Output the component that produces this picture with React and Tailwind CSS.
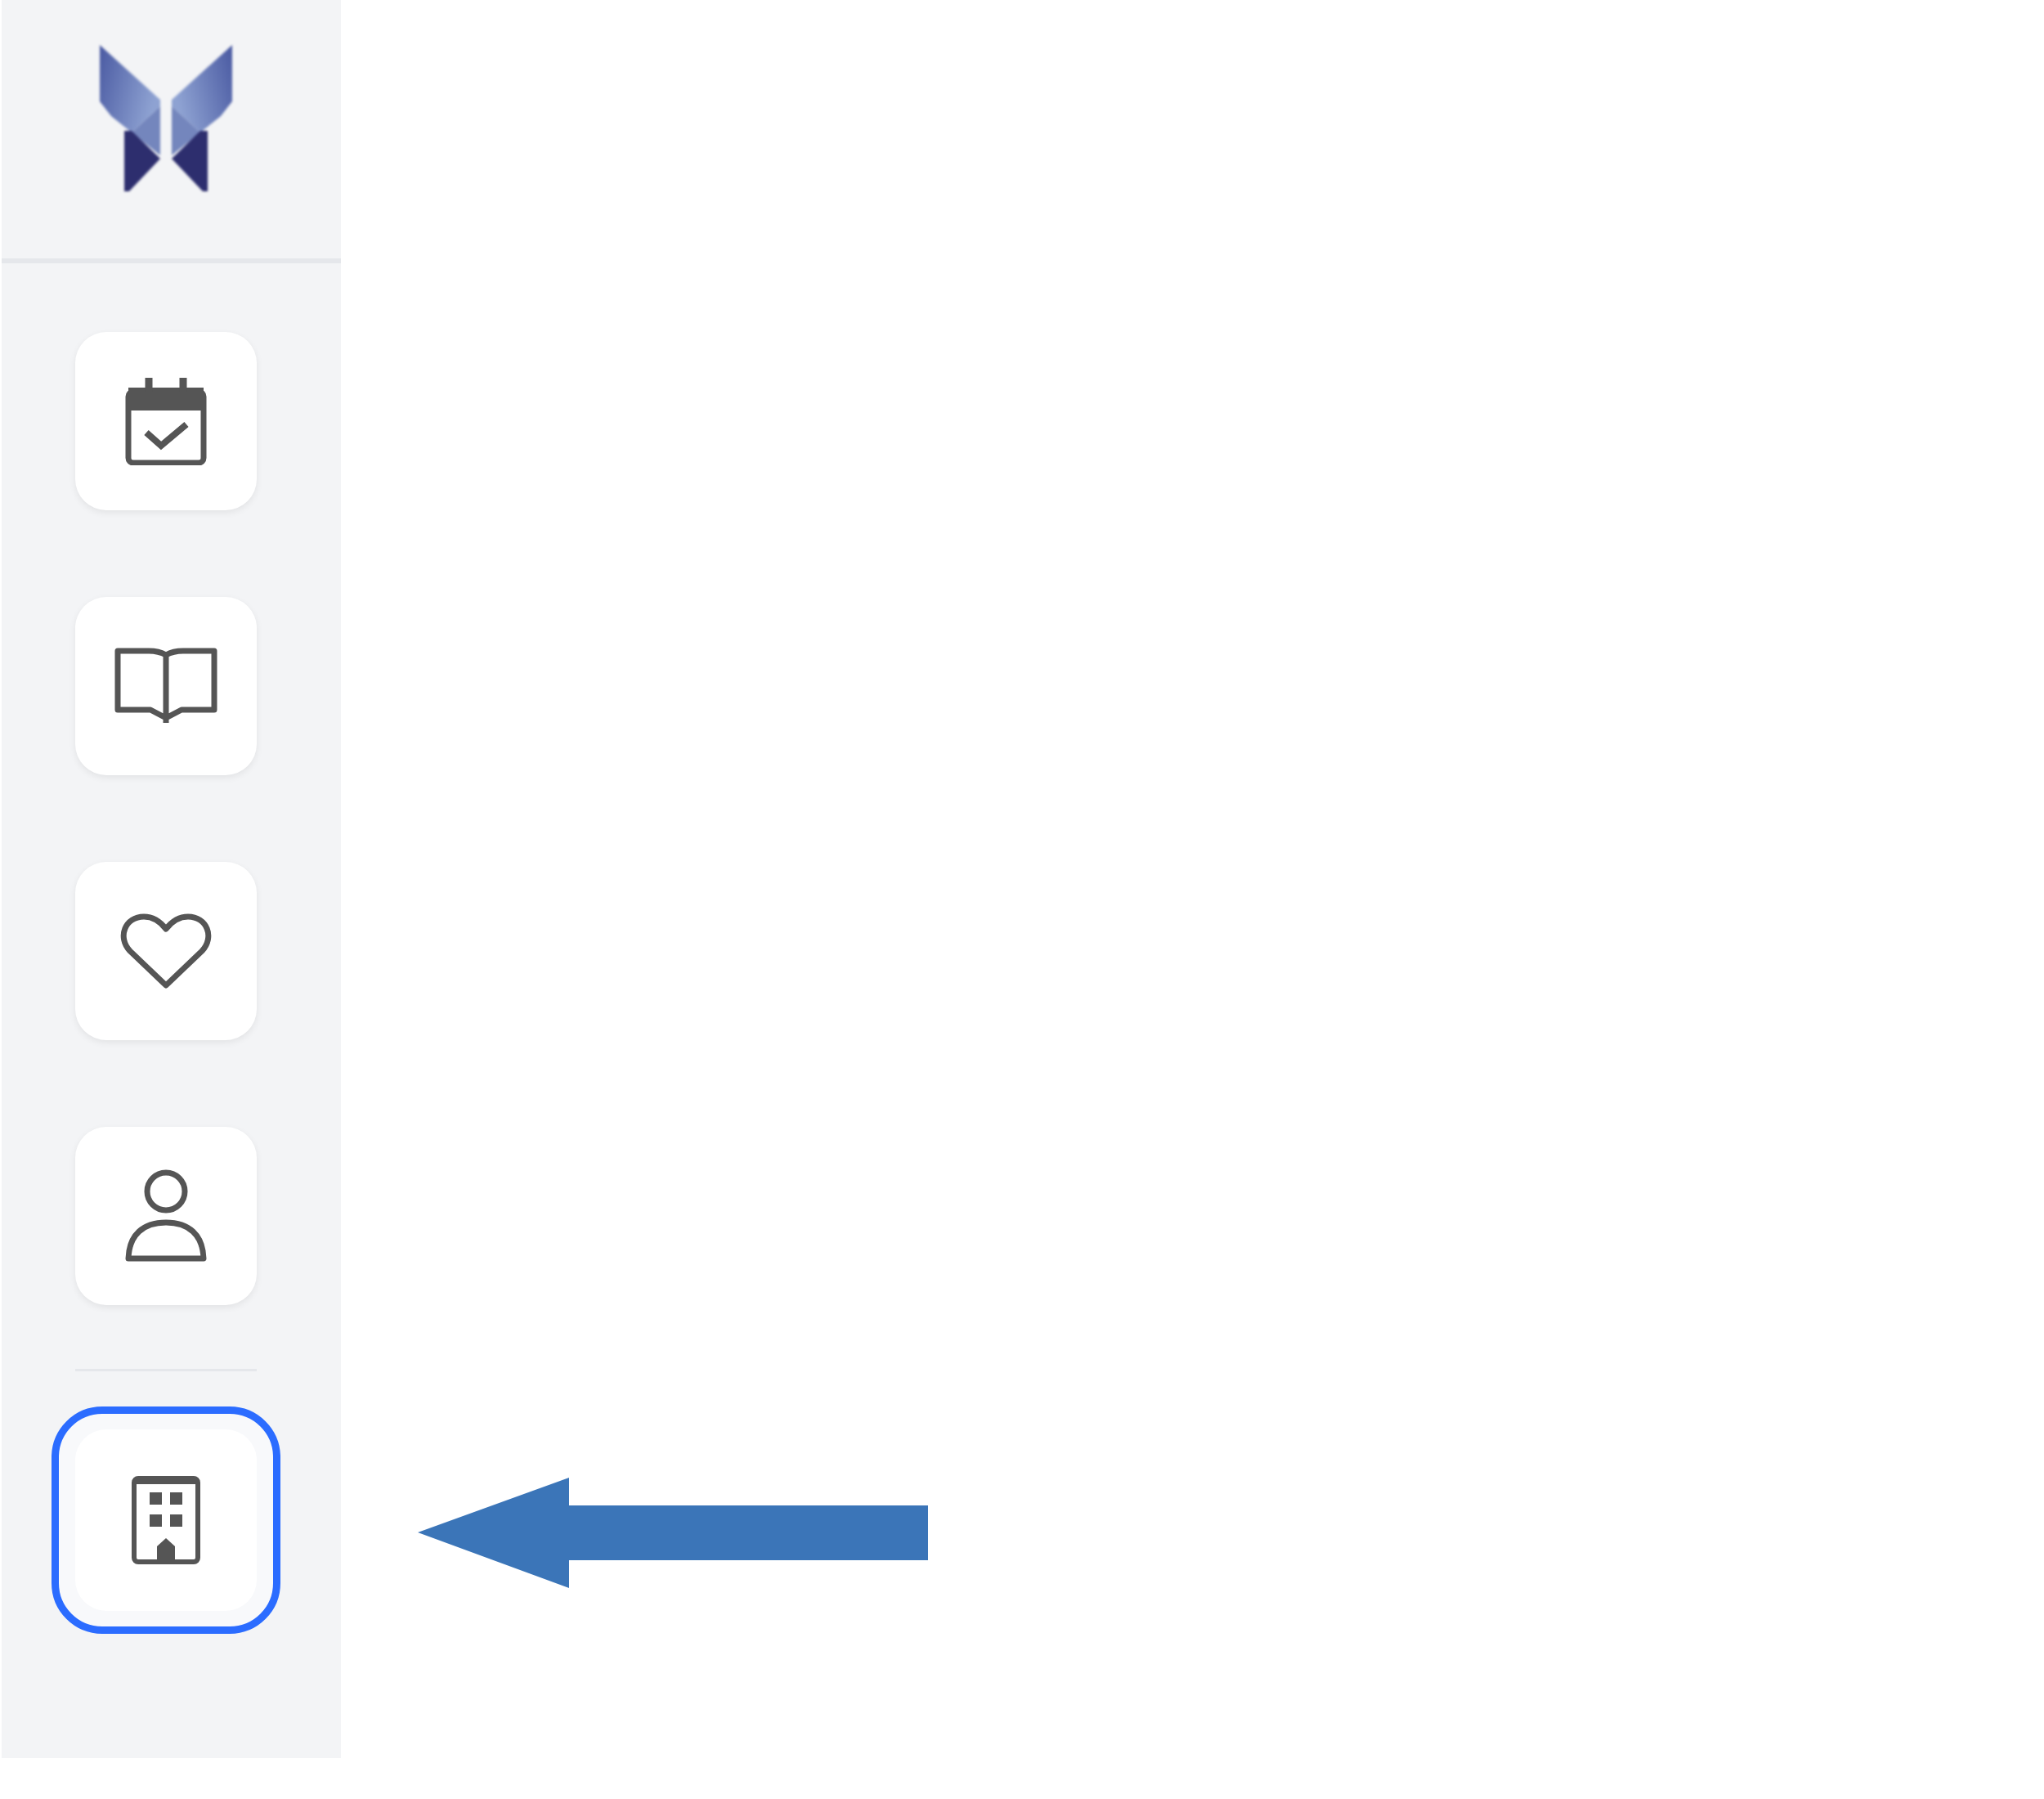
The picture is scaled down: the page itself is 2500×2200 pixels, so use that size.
import React from "react";

const Logo = () => (
  <svg width="162" height="184" viewBox="0 0 162 184" className="blur-[1.5px]">
    <defs>
      <linearGradient id="wingLeft" x1="0" y1="0" x2="1" y2="0.35">
        <stop offset="0" stopColor="#4a5aa2" />
        <stop offset="1" stopColor="#8ea2d2" />
      </linearGradient>
      <linearGradient id="wingRight" x1="1" y1="0" x2="0" y2="0.35">
        <stop offset="0" stopColor="#4a5aa2" />
        <stop offset="1" stopColor="#8ea2d2" />
      </linearGradient>
    </defs>
    <path d="M0 3 L74 70 L74 78 L39 110 L14 90 L0 72 Z" fill="url(#wingLeft)" />
    <path d="M74 78 L39 110 L74 138 Z" fill="#7486bd" />
    <path d="M30 108 L39 108 L74 142 L36 182 L30 182 Z" fill="#2d2e6e" />
    <path d="M162 3 L88 70 L88 78 L123 110 L148 90 L162 72 Z" fill="url(#wingRight)" />
    <path d="M88 78 L123 110 L88 138 Z" fill="#7486bd" />
    <path d="M132 108 L123 108 L88 142 L126 182 L132 182 Z" fill="#2d2e6e" />
  </svg>
);

const CalendarIcon = () => (
  <svg width="100" height="108" viewBox="0 0 100 108" fill="none" stroke="#555" strokeWidth="7" className="blur-[0.7px]">
    <path d="M4 24 a6 6 0 0 1 6-6 H90 a6 6 0 0 1 6 6 V99 a6 6 0 0 1-6 6 H10 a6 6 0 0 1-6-6 Z" />
    <path d="M4 13 H96 V41 H4 Z" fill="#555" stroke="none" />
    <path d="M29 1 V18 M71 1 V18" strokeWidth="9" />
    <path d="M26 68 L44 84 L75 58" strokeWidth="8" />
  </svg>
);

const BookIcon = () => (
  <svg width="126" height="94" viewBox="0 0 126 94" fill="none" stroke="#555" strokeWidth="7" className="blur-[0.7px]">
    <path d="M63 9 C56 5 50 4 42 4 H4 V76 H44 L63 86 L82 76 H122 V4 H84 C76 4 70 5 63 9 V92" strokeLinejoin="round" />
  </svg>
);

const HeartIcon = () => (
  <svg width="114" height="94" viewBox="0 0 114 94" fill="none" stroke="#555" strokeWidth="7" className="blur-[0.7px]">
    <path d="M57 89 L13 47 C-3 30 7 5 30 5 C41 5 50 11 57 20 C64 11 73 5 84 5 C107 5 117 30 101 47 Z" strokeLinejoin="round" />
  </svg>
);

const PersonIcon = () => (
  <svg width="100" height="114" viewBox="0 0 100 114" fill="none" stroke="#555" strokeWidth="7" className="blur-[0.7px]">
    <circle cx="50" cy="27" r="23" />
    <path d="M4 109 C5 80 22 65 50 65 C78 65 95 80 96 109 Z" strokeLinejoin="round" />
  </svg>
);

const BuildingIcon = () => (
  <svg width="84" height="108" viewBox="0 0 84 108" fill="none" stroke="#555" strokeWidth="6" className="blur-[0.7px]">
    <rect x="3" y="3" width="78" height="102" rx="5" />
    <path d="M3 3 H81 V10 H3 Z" fill="#555" stroke="none" />
    <g fill="#555" stroke="none">
      <rect x="22" y="20" width="15" height="15" />
      <rect x="47" y="20" width="15" height="15" />
      <rect x="22" y="47" width="15" height="15" />
      <rect x="47" y="47" width="15" height="15" />
      <path d="M31 105 V86 L42 76 L53 86 V105 Z" />
    </g>
  </svg>
);

const NavCard = ({ children }) => (
  <div className="w-[222px] h-[218px] flex items-center justify-center rounded-[38px] bg-white shadow-[0_3px_8px_rgba(0,0,0,0.07)]">
    {children}
  </div>
);

export default function App() {
  return (
    <div className="relative w-[2500px] h-[2200px] bg-white pl-[2px]">
      <aside className="w-[415px] h-[2150px] bg-[#f3f4f6] flex flex-col">
        <div className="h-[322px] shrink-0 border-b-[6px] border-[#e5e7eb] pt-[52px] pl-[120px]">
          <Logo />
        </div>
        <nav className="flex flex-col pl-[90px] pt-[84px]">
          <div className="flex flex-col gap-[106px]">
            <NavCard><CalendarIcon /></NavCard>
            <NavCard><BookIcon /></NavCard>
            <NavCard><HeartIcon /></NavCard>
            <NavCard><PersonIcon /></NavCard>
          </div>
          <div className="w-[222px] h-[3px] bg-[#e5e7eb] mt-[78px] mb-[43px]" />
          <div className="w-[280px] h-[278px] -ml-[29px] rounded-[62px] border-[9px] border-[#2b6cff] bg-[#f8f9fb] flex items-center justify-center">
            <div className="w-[222px] h-[222px] flex items-center justify-center rounded-[38px] bg-white">
              <BuildingIcon />
            </div>
          </div>
        </nav>
      </aside>
      {/* annotation arrow sits over the page */}
      <svg className="absolute left-[511px] top-[1807px]" width="624" height="135" viewBox="0 0 624 135">
        <path d="M0 67 L185 0 V34 H624 V101 H185 V135 Z" fill="#3b75b8" />
      </svg>
    </div>
  );
}
